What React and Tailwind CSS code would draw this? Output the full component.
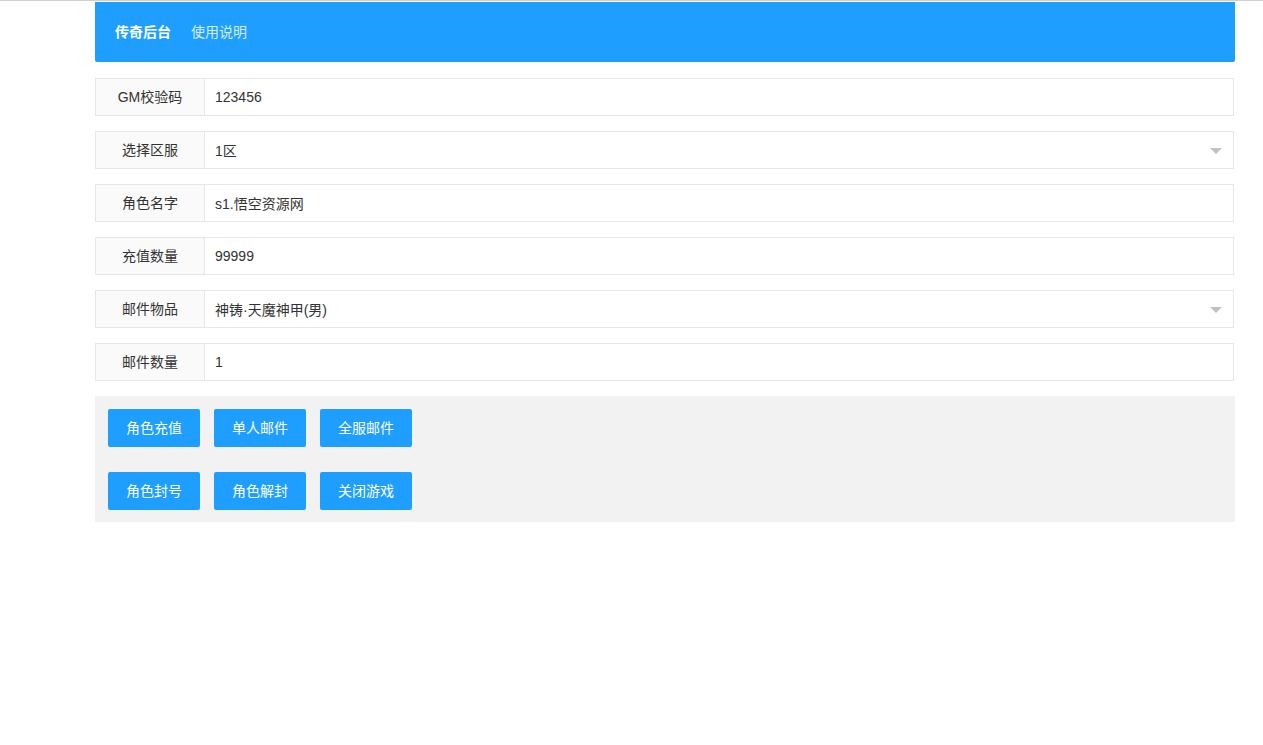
import React, { useState } from "react";

const rows = [
  { label: "GM校验码", value: "123456" },
  { label: "选择区服", value: "1区", select: true },
  { label: "角色名字", value: "s1.悟空资源网" },
  { label: "充值数量", value: "99999" },
  { label: "邮件物品", value: "神铸·天魔神甲(男)", select: true },
  { label: "邮件数量", value: "1" },
];

const buttons = [
  ["角色充值", "单人邮件", "全服邮件"],
  ["角色封号", "角色解封", "关闭游戏"],
];

function FormRow({ label, value, select }) {
  const [val, setVal] = useState(value);
  return (
    <div className="flex h-[38px] mb-[15px] w-[1139px]">
      <div className="w-[110px] shrink-0 flex items-center justify-center border border-[#e6e6e6] bg-[#fafafa] text-[14px] text-[#333]">
        {label}
      </div>
      <div className="relative flex-1 border border-l-0 border-[#e6e6e6] bg-white">
        <input
          value={val}
          onChange={(e) => setVal(e.target.value)}
          readOnly={select}
          className="w-full h-full pl-[10px] text-[14px] text-[#333] outline-none bg-transparent"
        />
        {select && (
          <span className="absolute right-[11px] top-[16px] w-0 h-0 border-x-[6px] border-x-transparent border-t-[6px] border-t-[#c2c2c2]" />
        )}
      </div>
    </div>
  );
}

export default function App() {
  return (
    <div
      className="min-h-[745px] bg-white border-t border-[#cfcfcf] pt-px"
      style={{ fontFamily: '"Liberation Sans", Arial, "Noto Sans CJK SC", sans-serif' }}
    >
      <div className="ml-[95px] w-[1140px]">
        <div className="h-[60px] bg-[#1e9fff] rounded-b-[2px] flex items-center pl-[20px] text-[14px] mb-[16px]">
          <span className="font-bold text-white">传奇后台</span>
          <span className="ml-[20px] text-white/80">使用说明</span>
        </div>

        {rows.map((r) => (
          <FormRow key={r.label} {...r} />
        ))}

        <div className="bg-[#f2f2f2] px-[13px] pt-[13px] pb-[12px] flex flex-col gap-[25px]">
          {buttons.map((line, i) => (
            <div key={i} className="flex gap-[14px]">
              {line.map((b) => (
                <button
                  key={b}
                  className="w-[92px] h-[38px] bg-[#1e9fff] text-white text-[14px] rounded-[2px]"
                >
                  {b}
                </button>
              ))}
            </div>
          ))}
        </div>
      </div>
    </div>
  );
}
